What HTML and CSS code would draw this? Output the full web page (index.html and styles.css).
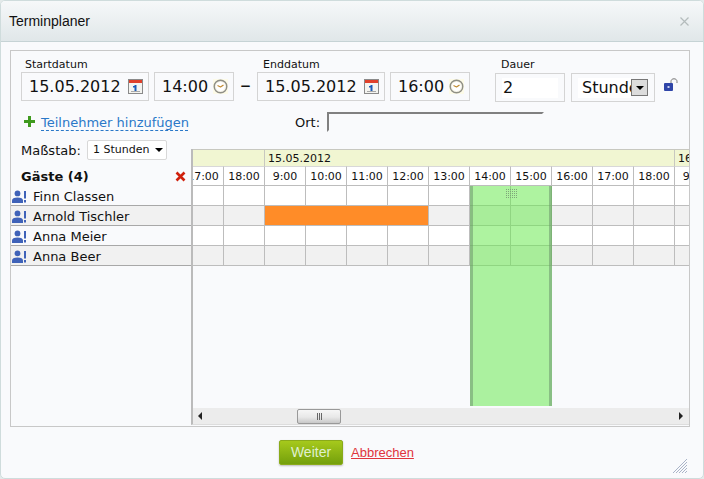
FILE: index.html
```html
<!DOCTYPE html>
<html lang="de">
<head>
    <meta charset="UTF-8">
    <title>Terminplaner</title>
    <link rel="stylesheet" href="styles.css">
</head>
<body>
<svg class="defs" width="0" height="0">
    <symbol id="cal" viewBox="0 0 15 15">
        <rect x="0.5" y="0.5" width="14" height="14" fill="#f4f4f0" stroke="#8a8a8a"/>
        <rect x="1" y="1" width="13" height="3" fill="#e0402a"/>
        <rect x="6.5" y="6" width="2" height="6" fill="#1c5cb8"/>
        <rect x="5" y="7" width="2" height="1.5" fill="#1c5cb8"/>
        <rect x="3" y="12" width="9" height="1" fill="#a8a8a8"/>
    </symbol>
    <symbol id="clock" viewBox="0 0 15 15">
        <rect width="15" height="15" fill="#fdfbe8"/>
        <circle cx="7.5" cy="7.5" r="6.3" fill="#f4f2e6" stroke="#8f8f86" stroke-width="1.4"/>
        <circle cx="7.5" cy="7.5" r="4.5" fill="#fff"/>
        <path d="M7.5 8l-3-1.500M7.500 8l3-2" fill="none" stroke="#c08a30" stroke-width="1.200"/>
    </symbol>
    <symbol id="guest" viewBox="0 0 14 13">
        <circle cx="5.5" cy="3.4" r="2.900" fill="#3f62b8"/>
        <path d="M0 13v-2.500c0-2 2-3 5.500-3s5.500 1 5.500 3V13z" fill="#3f62b8"/>
        <rect x="12" y="1" width="2" height="7.500" fill="#3f62b8"/>
        <rect x="12" y="10" width="2" height="2.500" fill="#3f62b8"/>
    </symbol>
</svg>

<div class="dialog">
    <div class="head">
        <span class="title">Terminplaner</span>
        <svg class="close" width="9" height="9" viewBox="0 0 9 9"><path d="M.5.5l8 8M8.500.5l-8 8" stroke="#b4bcbc" stroke-width="1.200"/></svg>
    </div>

    <div class="body">
        <div class="panel">
            <div class="when">
                <div class="group">
                    <div class="label">Startdatum</div>
                    <div class="controls">
                        <div class="field date"><span>15.05.2012</span><svg width="15" height="15"><use href="#cal"/></svg></div>
                        <div class="field time"><span>14:00</span><svg width="15" height="15"><use href="#clock"/></svg></div>
                    </div>
                </div>
                <div class="dash">&ndash;</div>
                <div class="group">
                    <div class="label end-label">Enddatum</div>
                    <div class="controls">
                        <div class="field date"><span>15.05.2012</span><svg width="15" height="15"><use href="#cal"/></svg></div>
                        <div class="field time"><span>16:00</span><svg width="15" height="15"><use href="#clock"/></svg></div>
                    </div>
                </div>
                <div class="group duration">
                    <div class="label">Dauer</div>
                    <div class="controls">
                        <div class="field amount"><span>2</span></div>
                        <div class="field unit">
                            <span class="unit-text">Stunden</span>
                            <span class="unit-btn"><i class="caret"></i></span>
                        </div>
                        <svg class="lock" width="15" height="14" viewBox="0 0 15 14">
                            <path d="M7 6V3.500C7 1.800 8.200 .8 10 .8s3 1 3 2.700V5" fill="none" stroke="#777" stroke-width="1"/>
                            <rect x="0" y="5" width="9" height="8" rx="1" fill="#2f45a8"/>
                            <rect x="3.500" y="8" width="2" height="2" fill="#c9d2f0"/>
                        </svg>
                    </div>
                </div>
            </div>

            <div class="extra">
                <svg class="plus" width="11" height="11" viewBox="0 0 11 11"><path d="M4 0h3v4h4v3H7v4H4V7H0V4h4z" fill="#3f9a1e"/></svg>
                <a class="add">Teilnehmer hinzufügen</a>
                <span class="place-label">Ort:</span>
                <div class="place"></div>
            </div>

            <div class="split">
                <div class="guests">
                    <div class="scale">
                        <span class="scale-label">Maßstab:</span>
                        <div class="scale-select">1 Stunden <i class="caret"></i></div>
                    </div>
                    <div class="guests-head">
                        <span>Gäste (4)</span>
                        <svg width="11" height="11" viewBox="0 0 11 11"><path d="M1.500 1.500l8 8M9.500 1.500l-8 8" stroke="#d0200c" stroke-width="2.600"/></svg>
                    </div>
                    <div class="guest"><svg width="14" height="13"><use href="#guest"/></svg>Finn Classen</div>
                    <div class="guest alt"><svg width="14" height="13"><use href="#guest"/></svg>Arnold Tischler</div>
                    <div class="guest"><svg width="14" height="13"><use href="#guest"/></svg>Anna Meier</div>
                    <div class="guest alt"><svg width="14" height="13"><use href="#guest"/></svg>Anna Beer</div>
                </div>

                <div class="plan">
                    <div class="view">
                        <div class="track">
                            <div class="dates">
                                <div class="day lead"></div>
                                <div class="day main">15.05.2012</div>
                                <div class="day next">16.05.2012</div>
                            </div>
                            <div class="row hours">
                                <div class="cell">17:00</div><div class="cell">18:00</div><div class="cell">9:00</div><div class="cell">10:00</div><div class="cell">11:00</div><div class="cell">12:00</div><div class="cell">13:00</div><div class="cell">14:00</div><div class="cell">15:00</div><div class="cell">16:00</div><div class="cell">17:00</div><div class="cell">18:00</div><div class="cell">9:00</div>
                            </div>
                            <div class="row">
                                <div class="cell"></div><div class="cell"></div><div class="cell"></div><div class="cell"></div><div class="cell"></div><div class="cell"></div><div class="cell"></div><div class="cell"></div><div class="cell"></div><div class="cell"></div><div class="cell"></div><div class="cell"></div><div class="cell"></div>
                            </div>
                            <div class="row alt">
                                <div class="cell"></div><div class="cell"></div><div class="cell busy"></div><div class="cell busy"></div><div class="cell busy"></div><div class="cell busy end"></div><div class="cell"></div><div class="cell"></div><div class="cell"></div><div class="cell"></div><div class="cell"></div><div class="cell"></div><div class="cell"></div>
                            </div>
                            <div class="row">
                                <div class="cell"></div><div class="cell"></div><div class="cell"></div><div class="cell"></div><div class="cell"></div><div class="cell"></div><div class="cell"></div><div class="cell"></div><div class="cell"></div><div class="cell"></div><div class="cell"></div><div class="cell"></div><div class="cell"></div>
                            </div>
                            <div class="row alt">
                                <div class="cell"></div><div class="cell"></div><div class="cell"></div><div class="cell"></div><div class="cell"></div><div class="cell"></div><div class="cell"></div><div class="cell"></div><div class="cell"></div><div class="cell"></div><div class="cell"></div><div class="cell"></div><div class="cell"></div>
                            </div>
                        </div>
                        <div class="slot">
                            <svg class="grip" width="11" height="9"><defs><pattern id="dots" width="2" height="2" patternUnits="userSpaceOnUse"><rect width="1" height="1" fill="#7fa67a"/></pattern></defs><rect width="11" height="9" fill="url(#dots)"/></svg>
                        </div>
                    </div>
                    <div class="scrollbar">
                        <i class="arrow left"></i>
                        <div class="thumb"><b></b><b></b><b></b></div>
                        <i class="arrow right"></i>
                    </div>
                </div>
            </div>
        </div>
    </div>

    <div class="foot">
        <a class="btn">Weiter</a>
        <a class="cancel">Abbrechen</a>
        <svg class="grip-corner" width="14" height="14" viewBox="0 0 14 14"><path d="M0 14L14 0M3 14L14 3M6 14l8-8M9 14l5-5M12 14l2-2" stroke="#aab4c8" stroke-width="1"/></svg>
    </div>
</div>
</body>
</html>
```

FILE: styles.css
```css
html,body{
    margin: 0;
    padding: 0;
    height: 100%;
    background: #e4eaea;
}
.defs{
    position: absolute;
}
i{
    font-style: normal;
}

.dialog{
    box-sizing: border-box;
    height: 479px;
    display: flex;
    flex-direction: column;
    border: 1px solid #cfdcdc;
    border-radius: 5px;
    background: #f9fafc;
    font-family: "DejaVu Sans", Verdana, sans-serif;
    color: #111;
    overflow: hidden;
}
.head{
    height: 40px;
    flex: none;
    display: flex;
    align-items: center;
    justify-content: space-between;
    padding: 0 14px 0 8px;
    background: linear-gradient(#f6f8f9, #e0e7e9);
    border-bottom: 1px solid #c6d3d5;
}
.title{
    font: 14px "Liberation Sans", Arial, sans-serif;
}
.body{
    flex: 1;
    min-height: 0;
    display: flex;
    padding: 8px 13px 0 9px;
}
.panel{
    flex: 1;
    border: 1px solid #c8c8c8;
    display: flex;
    flex-direction: column;
    min-width: 0;
}

/* datum zeile */
.when{
    display: flex;
    padding: 0 0 0 10px;
    height: 50px;
    flex: none;
}
.group .label{
    font-size: 11px;
    height: 21px;
    line-height: 28px;
    padding-left: 4px;
}
.group .end-label{
    padding-left: 6px;
}
.controls{
    display: flex;
    gap: 5px;
    align-items: center;
}
.field{
    box-sizing: border-box;
    height: 29px;
    border: 1px solid #d4d4d4;
    font-size: 16px;
    display: flex;
    align-items: center;
    padding: 0 5px 0 7px;
    justify-content: space-between;
}
.date{
    width: 128px;
}
.time{
    width: 80px;
}
.dash{
    width: 23px;
    padding-top: 20px;
    text-align: center;
    font-size: 21px;
    line-height: 29px;
}
.duration{
    margin-left: 25px;
}
.duration .label{
    height: 22px;
    padding-left: 6px;
}
.duration .controls{
    gap: 6px;
}
.amount{
    width: 70px;
    padding: 0 6px;
    justify-content: flex-start;
}
.amount span{
    display: block;
    width: 100%;
    background: #fff;
    line-height: 20px;
    padding-left: 1px;
}
.unit{
    width: 84px;
    padding: 0 6px;
    overflow: hidden;
    justify-content: flex-start;
}
.unit-text{
    display: block;
    width: 53px;
    flex: none;
    overflow: hidden;
    white-space: nowrap;
    background: #fff;
    padding-left: 4px;
    box-sizing: border-box;
    line-height: 20px;
}
.unit-btn{
    box-sizing: border-box;
    width: 17px;
    height: 17px;
    flex: none;
    border: 1px solid #777;
    background: #dcdcdc;
    display: flex;
    align-items: center;
    justify-content: center;
}
.caret{
    display: inline-block;
    border: 4px solid transparent;
    border-top-color: #000;
    border-bottom: 0;
}
.lock{
    margin-left: 3px;
    margin-top: -5px;
}

/* teilnehmer + ort */
.extra{
    height: 36px;
    flex: none;
    display: flex;
    align-items: center;
    padding: 5px 0 0 13px;
    box-sizing: border-box;
}
.add{
    margin-left: 6px;
    width: 147px;
    font-size: 13px;
    color: #2a78c8;
    border-bottom: 1px dashed #2a78c8;
    white-space: nowrap;
    line-height: 15px;
    margin-top: 3px;
}
.place-label{
    margin-left: 107px;
    font-size: 13px;
    margin-top: 2px;
}
.place{
    box-sizing: border-box;
    margin-left: 7px;
    width: 217px;
    height: 20px;
    background: #f9fafc;
    border: 2px solid;
    border-color: #808080 #f9fafc #f9fafc #808080;
}

/* unterer teil */
.split{
    flex: 1;
    min-height: 0;
    display: flex;
}
.guests{
    width: 180px;
    flex: none;
}
.scale{
    display: flex;
    align-items: center;
    padding: 3px 0 0 10px;
    height: 20px;
    font-size: 13px;
}
.scale-label{
    width: 66px;
    flex: none;
    white-space: nowrap;
}
.scale-select{
    box-sizing: border-box;
    width: 80px;
    height: 20px;
    border: 1px solid #d8d8d8;
    border-radius: 2px;
    background: #fff;
    font-size: 11px;
    line-height: 18px;
    padding-left: 5px;
    white-space: nowrap;
}
.scale-select .caret{
    margin-left: 2px;
    vertical-align: 1px;
}
.guests-head{
    box-sizing: border-box;
    height: 26px;
    display: flex;
    align-items: center;
    justify-content: space-between;
    padding: 7px 5px 0 10px;
    font-size: 13px;
    font-weight: bold;
}
.guest{
    box-sizing: border-box;
    height: 20px;
    display: flex;
    align-items: center;
    gap: 7px;
    padding-left: 1px;
    padding-top: 1px;
    font-size: 13px;
    border-bottom: 1px solid #a8a8a8;
    white-space: nowrap;
}
.guest.alt{
    background: #f1f1f1;
}

.plan{
    flex: 1;
    min-width: 0;
    margin-top: 12px;
    border-left: 2px solid #bbb;
    border-bottom: 1px solid #ddd;
    margin-bottom: 1px;
    display: flex;
    flex-direction: column;
}
.view{
    flex: 1;
    min-height: 0;
    position: relative;
    overflow: hidden;
}
.track{
    margin-left: -10px;
    width: 533px;
}
.dates{
    display: flex;
    height: 17px;
    font-size: 11px;
    line-height: 17px;
}
.day{
    box-sizing: border-box;
    background: #f1f6d2;
    border: 1px solid #c8c8c0;
    border-width: 1px 1px 0 0;
    padding-left: 3px;
    overflow: hidden;
    white-space: nowrap;
    flex: none;
}
.lead{
    width: 82px;
}
.main{
    width: 410px;
}
.next{
    width: 41px;
}
.row{
    display: flex;
    height: 20px;
}
.row .cell{
    box-sizing: border-box;
    width: 41px;
    flex: none;
    background: #fff;
    border-right: 1px solid #bdbdbd;
    border-bottom: 1px solid #bdbdbd;
}
.row.alt .cell{
    background: #f1f1f1;
}
.hours .cell{
    font-size: 11px;
    line-height: 20px;
    text-align: center;
    border-top: 1px solid #d8d8d8;
    overflow: hidden;
    white-space: nowrap;
}
.row.alt .busy{
    background: #ff8c28;
    border-right-color: #ff8c28;
}
.row.alt .end{
    border-right-color: #bdbdbd;
}

/* gewaehlter zeitraum liegt ueber dem raster */
.slot{
    position: absolute;
    left: 277px;
    top: 37px;
    bottom: 2px;
    width: 82px;
    box-sizing: border-box;
    background: rgba(108,233,82,.55);
    border: 3px solid rgba(110,150,110,.55);
    border-width: 0 3px;
}
.grip{
    position: absolute;
    left: 33px;
    top: 3px;
}

.scrollbar{
    height: 16px;
    flex: none;
    background: #ececec;
    display: flex;
    align-items: center;
    position: relative;
}
.arrow{
    width: 0;
    height: 0;
    border: 4px solid transparent;
}
.arrow.left{
    border-right-color: #222;
    border-left: 0;
    margin-left: 5px;
}
.arrow.right{
    border-left-color: #222;
    border-right: 0;
    margin-left: auto;
    margin-right: 6px;
}
.thumb{
    box-sizing: border-box;
    width: 44px;
    height: 15px;
    margin-left: 95px;
    border: 1px solid #999;
    border-radius: 2px;
    background: linear-gradient(#f6f6f6, #e8e8e8 55%, #c8c8c8);
    display: flex;
    align-items: center;
    justify-content: center;
    gap: 1px;
}
.thumb b{
    width: 1px;
    height: 7px;
    background: #666;
}

.foot{
    height: 51px;
    flex: none;
    display: flex;
    align-items: center;
    padding-left: 278px;
    position: relative;
}
.btn{
    box-sizing: border-box;
    width: 64px;
    height: 25px;
    border-radius: 2px;
    background: linear-gradient(#a6c91c, #74a00c);
    border: 1px solid #8aaa1a;
    box-shadow: 0 1px 2px #bbb;
    color: #dff0d0;
    font: 14px/23px "Liberation Sans", Arial, sans-serif;
    text-align: center;
}
.cancel{
    margin-left: 8px;
    color: #e0343c;
    text-decoration: underline;
    font: 13px "Liberation Sans", Arial, sans-serif;
}
.grip-corner{
    position: absolute;
    right: 16px;
    bottom: 5px;
}
```
